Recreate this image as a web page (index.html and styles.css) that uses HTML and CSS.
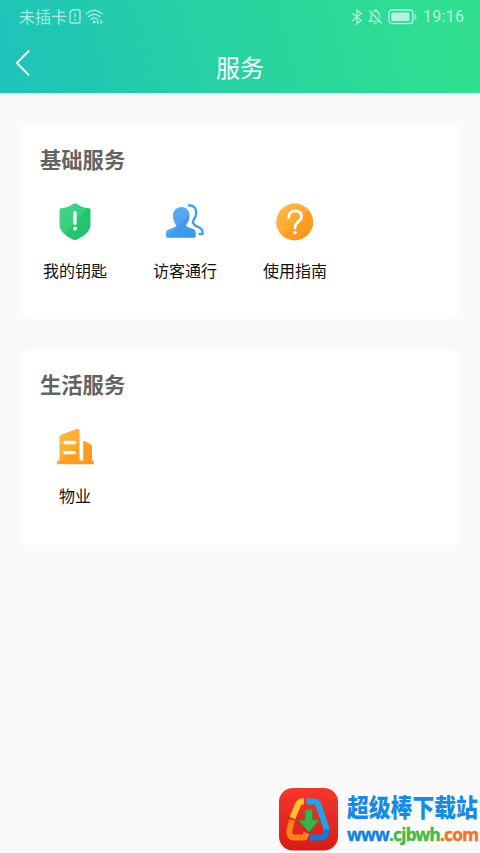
FILE: index.html
```html
<!DOCTYPE html>
<html lang="zh-CN">
<head>
<meta charset="utf-8">
<title>服务</title>
<link rel="stylesheet" href="styles.css">
</head>
<body>
<header class="header">
  <div class="status">
    <div class="status-left">
      <span class="carrier">未插卡</span>
      <svg class="sim" width="12" height="15" viewBox="0 0 12 15" fill="none" stroke="currentColor" stroke-width="1.4"><path d="M3.500 .8h6.200q1.300 0 1.300 1.300v10.600q0 1.300-1.300 1.300H2.300Q1 14 1 12.700V3.500z"/><path d="M6 4v4.200M6 9.800v1.600"/></svg>
      <svg class="wifi" width="19" height="16" viewBox="0 0 19 16" fill="none" stroke="currentColor" stroke-width="1.4" stroke-linecap="round"><path d="M1.200 4.800Q9.200-2.200 17.200 4.800M3.600 7.600q5.600-4.800 11.200 0M6.200 10.300q3-2.500 6 0"/><circle cx="9.200" cy="13" r=".8" fill="currentColor"/><path d="M13.300 11.500l-1.200 1.400 1.200 1.400M15.800 11.500l1.200 1.400-1.200 1.400" stroke-width="1.200"/></svg>
    </div>
    <div class="status-right">
      <svg class="bt" width="12" height="16" viewBox="0 0 12 16" fill="none" stroke="currentColor" stroke-width="1.300"><path d="M1.200 4l8.800 7.500-4 3.500V1l4 3.500L1.200 12"/></svg>
      <svg class="bell" width="15" height="16" viewBox="0 0 15 16" fill="none" stroke="currentColor" stroke-width="1.300"><path d="M1 1.500l13 13M3.300 5v5L1.500 12.300H11M5 2.900Q7.400 1 9.900 2.900 11.500 4.200 11.500 6v3.800M6.200 1.600q1.300-1.300 2.600 0M6 14.200q1.500 1.100 3 0"/></svg>
      <svg class="battery" width="29" height="16" viewBox="0 0 29 16"><rect x=".9" y="1" width="24" height="13.500" rx="3" fill="none" stroke="currentColor" stroke-width="1.300"/><rect x="3.300" y="3.400" width="18" height="8.700" rx="1" fill="currentColor"/><path d="M27.500 5v5.500" stroke="currentColor" stroke-width="1.500"/></svg>
      <span class="time">19:16</span>
    </div>
  </div>
  <div class="nav">
    <svg class="back" width="16" height="28" viewBox="0 0 16 28" fill="none" stroke="#fff" stroke-width="1.800"><path d="M14.200 1.500L1.800 14l12.400 12.500"/></svg>
    <h1 class="nav-title">服务</h1>
  </div>
</header>
<main class="content">
  <section class="card">
    <h2 class="card-title">基础服务</h2>
    <div class="items">
      <a class="item">
        <svg width="40" height="40" viewBox="0 0 40 40"><defs><linearGradient id="green" x1="0" y1="0" x2="1" y2="1"><stop offset="0" stop-color="#4bd48c"/><stop offset=".5" stop-color="#35ce7c"/><stop offset=".52" stop-color="#25c66e"/><stop offset="1" stop-color="#23bd69"/></linearGradient></defs><path d="M20 1.200q1.200 0 2.200.8 5 3.700 11.800 4.300 1.500.2 1.500 1.700v14c0 7-5.500 11.500-13.500 15.500q-2 1-4 0C10 33.500 4.500 29 4.500 22V8q0-1.500 1.500-1.700 6.800-.6 11.800-4.300 1-.8 2.200-.8z" fill="url(#green)"/><path d="M20 10.500v11" stroke="#fff" stroke-width="3.200" stroke-linecap="round"/><circle cx="20" cy="26.600" r="2" fill="#fff"/></svg>
        <span class="label">我的钥匙</span>
      </a>
      <a class="item">
        <svg width="40" height="40" viewBox="0 0 40 40"><defs><linearGradient id="blue" x1="0" y1="0" x2="1" y2="1"><stop offset="0" stop-color="#66adf3"/><stop offset=".5" stop-color="#52a3ef"/><stop offset=".52" stop-color="#429aec"/><stop offset="1" stop-color="#3b97ed"/></linearGradient></defs><path d="M16.500 5c5 0 8 3.700 8 8.500 0 4-1.200 7-3 9-.8 1 0 2 1.200 2.500l6 2.300q2 .8 2 3v4q0 1.500-1.500 1.500H2.500Q1 35.800 1 34.300v-3.500q0-2.300 2.200-3l6.300-2.500c1.500-.5 2-1.500 1.200-2.500-1.500-2-2.700-5.300-2.700-9.300C8 8.700 11.500 5 16.500 5z" fill="url(#blue)"/><path d="M24 3.500c4.700-.5 7.300 2.800 7.300 7 0 3-1.300 5.500-2.900 7.800-1.200 2 .1 4.200 2.100 5.300l4.500 2.400q3 1.600 2.500 6l-3-.1" fill="none" stroke="#429eee" stroke-width="2.400" stroke-linecap="round"/></svg>
        <span class="label">访客通行</span>
      </a>
      <a class="item">
        <svg width="40" height="40" viewBox="0 0 40 40"><defs><linearGradient id="orange" x1="0" y1="0" x2="1" y2="1"><stop offset="0" stop-color="#ffb84a"/><stop offset=".5" stop-color="#ffab32"/><stop offset=".52" stop-color="#ff9f20"/><stop offset="1" stop-color="#fb961c"/></linearGradient></defs><circle cx="19.700" cy="20" r="18.500" fill="url(#orange)"/><path d="M13.700 15.500c0-4.400 2.800-6.700 6.300-6.700 3.700 0 6.600 2.300 6.600 5.700 0 5-6.600 5.300-6.600 10.700v1" fill="none" stroke="#fff" stroke-width="2.700" stroke-linecap="round"/><circle cx="20" cy="30.700" r="1.800" fill="#fff"/></svg>
        <span class="label">使用指南</span>
      </a>
    </div>
  </section>
  <section class="card card-life">
    <h2 class="card-title">生活服务</h2>
    <div class="items">
      <a class="item">
        <svg width="40" height="40" viewBox="0 0 40 40"><path d="M4.500 33.500V10q0-1.500 1.500-2.200l15-5.600q3.500-1.200 3.500 2v29.300h3.700V15.300q0-2 2-1l5.500 3q1.300.7 1.300 2.200v14h.5q1.200 0 1.200 1.200v2.500H2v-2.500q0-1.200 1.200-1.200z" fill="url(#orange)"/><path d="M9.800 15.500h9.500M9.800 25.700h9.500" stroke="#fff" stroke-width="3.300" stroke-linecap="round"/></svg>
        <span class="label">物业</span>
      </a>
    </div>
  </section>
</main>
<aside class="watermark">
  <svg class="logo" width="60" height="66" viewBox="0 0 60 66">
    <defs>
      <linearGradient id="red" x1="0" y1="0" x2="0" y2="1"><stop offset="0" stop-color="#f5372d"/><stop offset="1" stop-color="#d51c16"/></linearGradient>
    </defs>
    <rect x="1" y="2" width="59" height="62.500" rx="14" fill="url(#red)"/>
    <g fill="none" stroke-width="6" stroke-linejoin="round">
      <path d="M26 15.500h-1.500q-3 0-4.500 3L14.500 32" stroke="#ffc12b"/>
      <path d="M14 34L12.500 40Q9 51 16 51.500h10.500L28.500 47" stroke="#ff8118"/>
      <path d="M28.500 15.500h7q3.500 0 5 3.500L47 38q2 5 1 9" stroke="#1fa3ef"/>
      <path d="M32 51.500H42.500q6 0 6-8" stroke="#1477dc"/>
    </g>
    <path d="M27 23.500h7.500V34H41L31 46.500 20.500 34H27z" fill="#35b54a" stroke="#258f3a" stroke-width=".8"/>
  </svg>
  <div class="words">
    <div class="brand">超级棒下载站</div>
    <div class="url"><span class="url-www">www</span><span class="url-name">.cjbwh</span><span class="url-com">.com</span></div>
  </div>
</aside>
</body>
</html>
```
FILE: styles.css
```css
* { box-sizing: border-box; }
body {
  margin: 0;
  min-height: 853px;
  background: #fafafa;
  font-family: "Noto Sans CJK SC", sans-serif;
  color: #111;
  overflow: hidden;
}
.header {
  height: 93px;
  background: linear-gradient(75deg, #1fc4b8 5%, #28d3a0 50%, #31e08e 98%);
}
.status {
  height: 33px;
  padding: 0 16px 0 19px;
  display: flex;
  justify-content: space-between;
  color: #b4f3df;
}
.status-left, .status-right { display: flex; align-items: center; }
.status-left { color: #a2ece2; }
.status svg { display: block; }
.carrier { font-size: 16px; line-height: 32px; margin-top: -2px; }
.sim { margin-left: 2px; }
.wifi { margin-left: 4px; }
.bell { margin-left: 5px; }
.battery { margin-left: 5px; }
.time {
  margin-left: 6px;
  width: 41px;
  font-family: Roboto, sans-serif;
  font-size: 16px;
  letter-spacing: .3px;
  white-space: nowrap;
}
.nav {
  height: 60px;
  display: grid;
  grid-template-columns: 80px 1fr 80px;
  align-items: center;
}
.back { margin: 0 0 0 15px; }
.nav-title {
  margin: 7px 0 0;
  text-align: center;
  font-size: 24px;
  line-height: 34px;
  font-weight: 400;
  color: #fff;
}
.content {
  padding: 31px 20px 0;
  display: flex;
  flex-direction: column;
  gap: 31px;
}
.card {
  height: 195px;
  padding-top: 20px;
  border-radius: 10px;
  background: #fff;
}
.card-life { padding-top: 19px; }
.card-title {
  margin: 0 0 0 20px;
  font-size: 21.3px;
  line-height: 30px;
  font-weight: 700;
  color: #636363;
}
.items { display: flex; margin-top: 28px; }
.item {
  width: 110px;
  display: flex;
  flex-direction: column;
  align-items: center;
}
.item svg { display: block; }
.label { margin-top: 16px; font-size: 16px; line-height: 24px; }
.watermark {
  position: absolute;
  left: 278px;
  top: 786px;
  display: flex;
  width: 202px;
  height: 67px;
}
.logo { display: block; flex: none; }
.words { margin: 6px 0 0 9px; white-space: nowrap; }
.brand {
  font-size: 21.8px;
  line-height: 30px;
  font-weight: 900;
  color: #178be2;
  transform: scaleY(1.13);
}
.url {
  font-family: "Noto Sans", sans-serif;
  font-size: 17.2px;
  line-height: 26px;
  font-weight: 700;
  display: flex;
  letter-spacing: -.72px;
  -webkit-text-stroke: .4px currentColor;
}
.url-www { color: #147fdc; }
.url-name { color: #47b944; }
.url-com { color: #ef7328; }
```
